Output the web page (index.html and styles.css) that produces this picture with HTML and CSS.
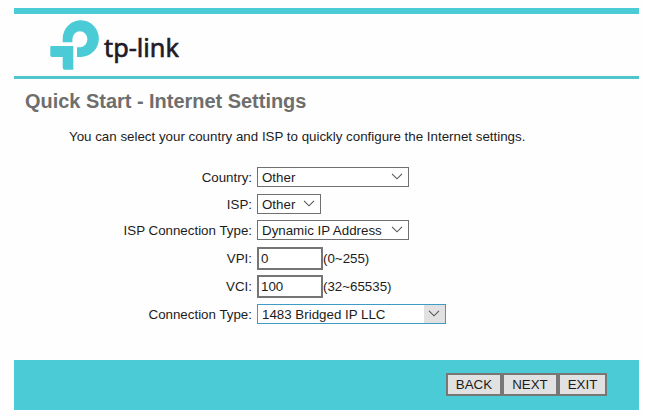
FILE: index.html
```
<!DOCTYPE html>
<html lang="en">
<head>
    <meta charset="UTF-8">
    <title>Quick Start - Internet Settings</title>
    <link rel="stylesheet" href="styles.css">
</head>
<body>
    <div class="page">
        <div class="header">
            <svg class="logo" width="134" height="54" viewBox="0 0 134 54">
                <path class="mark" d="M12.7 24.3V19.8A18.1 18.3 0 1 1 30.8 38.9H27V29.2H30.3A7.5 8 0 1 0 22.4 21V24.3Z"/>
                <path class="mark" d="M1.5 28H23.3V51.7H15A2.3 2.3 0 0 1 12.7 49.4V39H3A2.6 2.6 0 0 1 0.3 36.4V29.2Q.3 28 1.5 28Z"/>
                <text class="brand" x="54" y="39" textLength="75" lengthAdjust="spacingAndGlyphs">tp-link</text>
            </svg>
        </div>

        <div class="content">
            <h1>Quick Start - Internet Settings</h1>
            <p class="intro">You can select your country and ISP to quickly configure the Internet settings.</p>

            <form class="settings">
                <div class="row">
                    <label for="country">Country:</label>
                    <span class="select country">
                        <select id="country"><option>Other</option></select>
                        <svg class="arrow" width="12" height="7" viewBox="0 0 12 7"><path d="M1 .8L6 5.8L11 .8"/></svg>
                    </span>
                </div>
                <div class="row">
                    <label for="isp">ISP:</label>
                    <span class="select isp">
                        <select id="isp"><option>Other</option></select>
                        <svg class="arrow" width="12" height="7" viewBox="0 0 12 7"><path d="M1 .8L6 5.8L11 .8"/></svg>
                    </span>
                </div>
                <div class="row">
                    <label for="ispType">ISP Connection Type:</label>
                    <span class="select isp-type">
                        <select id="ispType"><option>Dynamic IP Address</option></select>
                        <svg class="arrow" width="12" height="7" viewBox="0 0 12 7"><path d="M1 .8L6 5.8L11 .8"/></svg>
                    </span>
                </div>
                <div class="row input-row">
                    <label for="vpi">VPI:</label>
                    <input type="text" id="vpi" value="0">
                    <span class="range">(0~255)</span>
                </div>
                <div class="row input-row">
                    <label for="vci">VCI:</label>
                    <input type="text" id="vci" value="100">
                    <span class="range">(32~65535)</span>
                </div>
                <div class="row">
                    <label for="connType">Connection Type:</label>
                    <span class="select conn-type active">
                        <select id="connType"><option>1483 Bridged IP LLC</option></select>
                        <svg class="arrow" width="12" height="7" viewBox="0 0 12 7"><path d="M1 .8L6 5.8L11 .8"/></svg>
                    </span>
                </div>
            </form>
        </div>

        <div class="footer">
            <button type="button" class="back">BACK</button>
            <button type="button" class="next">NEXT</button>
            <button type="button" class="exit">EXIT</button>
        </div>
    </div>
</body>
</html>
```
FILE: styles.css
```
* {
    box-sizing: border-box;
}
body {
    margin: 0;
    background-color: #fefefe;
    font-family: "Liberation Sans", Arial, sans-serif;
    font-size: 13.33px;
    color: #1c1c1c;
}
.page {
    width: 625px;
    height: 402px;
    margin: 8px 0 0 14px;
    display: flex;
    flex-direction: column;
}
.header {
    height: 71px;
    padding: 4px 0 0 36px;
    border-top: 6px solid #4acbd6;
    border-bottom: 3px solid #4fc5cc;
}
.logo {
    display: block;
}
.mark {
    fill: #4acbd6;
}
.brand {
    font-family: "Noto Sans", sans-serif;
    font-size: 25px;
    fill: #231a26;
    stroke: #231a26;
    stroke-width: 0.6;
}
.content {
    flex: 1;
}
h1 {
    margin: 10px 0 0 11px;
    font-size: 19.95px;
    line-height: 24px;
    color: #6e6e6c;
    white-space: nowrap;
}
.intro {
    margin: 15px 0 0 55px;
    line-height: 18px;
    white-space: nowrap;
}
.settings {
    margin-top: 21px;
}
.row {
    display: flex;
    align-items: center;
    height: 20px;
    margin-bottom: 7px;
}
.row:nth-child(2) {
    margin-bottom: 6px;
}
.input-row {
    height: 23px;
    margin-bottom: 5px;
}
.input-row + .input-row {
    margin-bottom: 6px;
}
.row label {
    width: 238px;
    margin-right: 5px;
    text-align: right;
}
.select {
    position: relative;
    height: 20px;
}
.country,
.isp-type {
    width: 152px;
}
.isp {
    width: 64px;
}
.conn-type {
    width: 189px;
}
select {
    display: block;
    width: 100%;
    height: 20px;
    padding: 0 0 0 4px;
    border: 1px solid #707070;
    border-radius: 0;
    background-color: #fff;
    appearance: none;
    font: inherit;
    color: inherit;
    outline: none;
}
.arrow {
    position: absolute;
    top: 6px;
    right: 6px;
    fill: none;
    stroke: #555;
    stroke-width: 1.1;
}
.active select {
    border-color: #3c9cc6;
    background: linear-gradient(to left, #e1e1e1 21px, #fff 21px);
}
input {
    width: 66px;
    height: 23px;
    padding: 0 2px;
    border: 2px solid #757575;
    font: inherit;
    color: inherit;
}
.footer {
    display: flex;
    height: 50px;
    padding: 13px 32px 0 0;
    justify-content: flex-end;
    background-color: #4acbd6;
}
button {
    height: 23px;
    padding: 0;
    border: 2px solid #777;
    background-color: #e1e1e1;
    font: inherit;
    color: inherit;
}
.back,
.next {
    width: 56px;
}
.exit {
    width: 49px;
}
```
